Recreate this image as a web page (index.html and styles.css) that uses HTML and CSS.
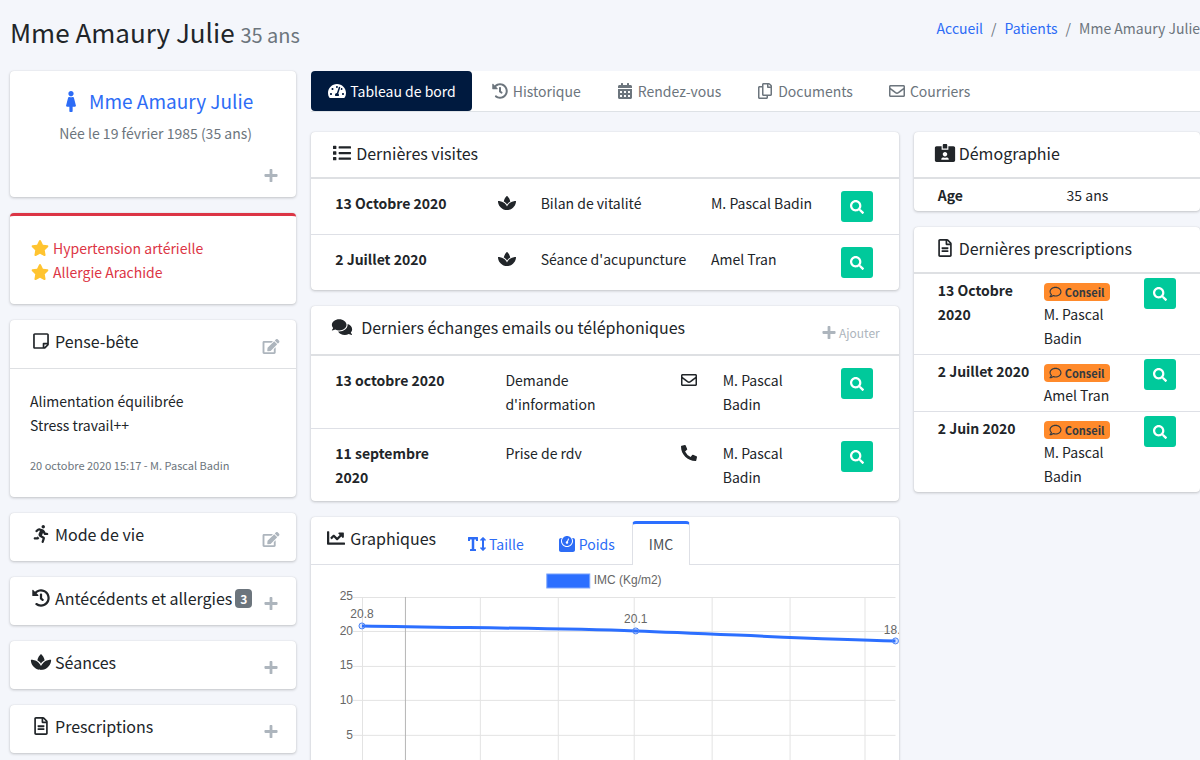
FILE: index.html
```html
<!DOCTYPE html>
<html lang="fr">
<head>
    <meta charset="UTF-8">
    <meta name="viewport" content="width=device-width, initial-scale=1.0">
    <title>Mme Amaury Julie</title>
    <link rel="stylesheet" href="styles.css">
</head>
<body>
    <svg class="sprite" aria-hidden="true">
        <symbol id="female" viewBox="0 0 256 512"><path d="M128 0c35.346 0 64 28.654 64 64s-28.654 64-64 64c-35.346 0-64-28.654-64-64S92.654 0 128 0m119.283 354.179l-48-192A24 24 0 0 0 176 144h-11.36c-22.711 10.443-49.59 10.894-73.28 0H80a24 24 0 0 0-23.283 18.179l-48 192C4.935 369.305 16.383 384 32 384h56v104c0 13.255 10.745 24 24 24h32c13.255 0 24-10.745 24-24V384h56c15.591 0 27.071-14.671 23.283-29.821z"/></symbol>
        <symbol id="plus" viewBox="0 0 448 512"><path d="M416 208H272V64c0-17.67-14.33-32-32-32h-32c-17.67 0-32 14.33-32 32v144H32c-17.67 0-32 14.33-32 32v32c0 17.67 14.33 32 32 32h144v144c0 17.67 14.33 32 32 32h32c17.67 0 32-14.33 32-32V304h144c17.67 0 32-14.33 32-32v-32c0-17.67-14.33-32-32-32z"/></symbol>
        <symbol id="star" viewBox="0 0 576 512"><path d="M259.3 17.8L194 150.2 47.9 171.5c-26.2 3.8-36.7 36.1-17.7 54.6l105.7 103-25 145.5c-4.5 26.3 23.2 46 46.4 33.7L288 439.6l130.7 68.7c23.2 12.2 50.9-7.4 46.4-33.7l-25-145.5 105.7-103c19-18.5 8.5-50.8-17.7-54.6L382 150.2 316.7 17.8c-11.7-23.6-45.6-23.9-57.4 0z"/></symbol>
        <symbol id="note" viewBox="0 0 448 512"><path d="M448 348.106V80c0-26.51-21.49-48-48-48H48C21.49 32 0 53.49 0 80v351.988c0 26.51 21.49 48 48 48h268.118a48 48 0 0 0 33.941-14.059l83.882-83.882A48 48 0 0 0 448 348.106zm-128 80.015v-76.118h76.118L320 428.121zM400 80v223.988H296c-13.255 0-24 10.745-24 24v104H48V80h352z"/></symbol>
        <symbol id="edit" viewBox="0 0 576 512"><path d="M402.6 83.2l90.2 90.2c3.8 3.8 3.8 10 0 13.8L274.4 405.6l-92.8 10.3c-12.4 1.4-22.9-9.1-21.5-21.5l10.3-92.8L388.8 83.2c3.8-3.8 10-3.8 13.8 0zm162-22.9l-48.8-48.8c-15.2-15.2-39.9-15.2-55.2 0l-35.4 35.4c-3.8 3.8-3.8 10 0 13.8l90.2 90.2c3.8 3.8 10 3.8 13.8 0l35.4-35.4c15.2-15.3 15.2-40 0-55.2zM384 346.2V448H64V128h229.8c3.2 0 6.2-1.3 8.5-3.5l40-40c7.6-7.6 2.2-20.5-8.5-20.5H48C21.5 64 0 85.5 0 112v352c0 26.5 21.5 48 48 48h352c26.5 0 48-21.5 48-48V306.2c0-10.7-12.9-16-20.5-8.5l-40 40c-2.2 2.3-3.5 5.3-3.5 8.5z"/></symbol>
        <symbol id="running" viewBox="0 0 416 512"><path d="M272 96c26.51 0 48-21.49 48-48S298.51 0 272 0s-48 21.49-48 48 21.49 48 48 48zM113.69 317.47l-14.8 34.52H32c-17.67 0-32 14.33-32 32s14.33 32 32 32h77.45c19.25 0 36.58-11.44 44.11-29.09l8.79-20.52-10.67-6.3c-17.32-10.23-30.06-25.37-37.99-42.61zM384 223.99h-44.03l-26.06-53.25c-12.5-25.55-35.45-44.23-61.78-50.94l-71.08-21.14c-28.3-6.8-57.77-.55-80.84 17.14l-39.67 30.41c-14.03 10.75-16.69 30.83-5.94 44.86s30.84 16.69 44.86 5.94l39.69-30.41c7.67-5.89 17.44-8 25.27-6.14l14.7 4.37-37.46 87.39c-12.62 29.48-1.31 64.01 26.3 80.31l84.98 50.17-27.47 87.73c-5.28 16.86 4.11 34.82 20.97 40.09 3.19 1 6.41 1.48 9.58 1.48 13.61 0 26.23-8.77 30.52-22.45l31.64-101.06c5.91-20.77-2.89-43.08-21.64-54.39l-61.24-36.14 31.31-78.28 20.27 41.43c8 16.34 24.92 26.89 43.11 26.89H384c17.67 0 32-14.33 32-32s-14.33-31.99-32-31.99z"/></symbol>
        <symbol id="history" viewBox="0 0 512 512"><path d="M504 255.531c.253 136.64-111.18 248.372-247.82 248.468-59.015.042-113.223-20.53-155.822-54.911-11.077-8.94-11.905-25.541-1.839-35.607l11.267-11.267c8.609-8.609 22.353-9.551 31.891-1.984C173.062 425.135 212.781 440 256 440c101.705 0 184-82.311 184-184 0-101.705-82.311-184-184-184-48.814 0-93.149 18.969-126.068 49.932l50.754 50.754c10.08 10.08 2.941 27.314-11.313 27.314H24c-8.837 0-16-7.163-16-16V38.627c0-14.254 17.234-21.393 27.314-11.314l49.372 49.372C129.209 34.136 189.552 8 256 8c136.81 0 247.747 110.78 248 247.531zm-180.912 78.784l9.823-12.63c8.138-10.463 6.253-25.542-4.21-33.679L288 256.349V152c0-13.255-10.745-24-24-24h-16c-13.255 0-24 10.745-24 24v135.651l65.409 50.874c10.463 8.137 25.541 6.253 33.679-4.21z"/></symbol>
        <symbol id="spa" viewBox="0 0 576 512"><path d="M568.25 192c-29.04.13-135.01 6.16-213.84 83-33.12 29.63-53.36 63.3-66.41 94.86-13.05-31.56-33.29-65.23-66.41-94.86-78.83-76.84-184.8-82.87-213.84-83-4.41-.02-7.79 3.4-7.75 7.82.23 27.92 7.14 126.14 88.77 199.3C172.79 480.94 256 480 288 480s115.19.95 199.23-80.88c81.64-73.17 88.54-171.38 88.77-199.3.04-4.42-3.34-7.84-7.75-7.82zM287.98 302.6c12.82-18.85 27.6-35.78 44.09-50.52 19.09-18.61 39.58-33.3 60.26-45.18-16.44-70.5-51.72-133.05-96.73-172.22-4.11-3.58-11.02-3.58-15.14 0-44.99 39.14-80.27 101.63-96.74 172.07 20.37 11.7 40.5 26.14 59.22 44.39a282.768 282.768 0 0 1 45.04 51.46z"/></symbol>
        <symbol id="file" viewBox="0 0 384 512"><path d="M288 248v28c0 6.6-5.4 12-12 12H108c-6.6 0-12-5.4-12-12v-28c0-6.6 5.4-12 12-12h168c6.6 0 12 5.4 12 12zm-12 72H108c-6.6 0-12 5.4-12 12v28c0 6.6 5.4 12 12 12h168c6.6 0 12-5.4 12-12v-28c0-6.6-5.4-12-12-12zm108-188.1V464c0 26.5-21.5 48-48 48H48c-26.5 0-48-21.5-48-48V48C0 21.5 21.5 0 48 0h204.1C264.8 0 277 5.1 286 14.1L369.9 98c9 8.9 14.1 21.2 14.1 33.9zm-128-80V128h76.1L256 51.9zM336 464V176H232c-13.3 0-24-10.7-24-24V48H48v416h288z"/></symbol>
        <symbol id="dashboard" viewBox="0 0 576 512"><path d="M288 32C128.94 32 0 160.94 0 320c0 52.8 14.25 102.26 39.06 144.8 5.61 9.62 16.3 15.2 27.44 15.2h443c11.14 0 21.83-5.58 27.44-15.2C561.75 422.26 576 372.8 576 320c0-159.06-128.94-288-288-288zm0 64c14.71 0 26.58 10.13 30.32 23.65-1.11 2.26-2.64 4.23-3.45 6.67l-9.22 27.67c-5.13 3.49-10.97 6.01-17.64 6.01-17.67 0-32-14.33-32-32S270.33 96 288 96zM96 384c-17.67 0-32-14.33-32-32s14.33-32 32-32 32 14.33 32 32-14.33 32-32 32zm48-160c-17.67 0-32-14.33-32-32s14.33-32 32-32 32 14.33 32 32-14.33 32-32 32zm246.77-72.41l-61.33 184C343.13 347.33 352 364.54 352 384c0 11.72-3.38 22.55-8.88 32H232.88c-5.5-9.45-8.88-20.28-8.88-32 0-33.94 26.5-61.43 59.9-63.59l61.34-184.01c4.17-12.56 17.73-19.45 30.36-15.17 12.57 4.19 19.35 17.79 15.17 30.36zm14.66 57.2l15.52-46.55c3.47-1.29 7.13-2.23 11.05-2.23 17.67 0 32 14.33 32 32s-14.33 32-32 32c-11.38-.01-20.89-6.28-26.57-15.22zM480 384c-17.67 0-32-14.33-32-32s14.33-32 32-32 32 14.33 32 32-14.33 32-32 32z"/></symbol>
        <symbol id="calendar" viewBox="0 0 448 512"><path d="M0 464c0 26.5 21.5 48 48 48h352c26.5 0 48-21.5 48-48V192H0v272zm320-196c0-6.6 5.4-12 12-12h40c6.6 0 12 5.4 12 12v40c0 6.6-5.4 12-12 12h-40c-6.6 0-12-5.4-12-12v-40zm0 128c0-6.6 5.4-12 12-12h40c6.6 0 12 5.4 12 12v40c0 6.6-5.4 12-12 12h-40c-6.6 0-12-5.4-12-12v-40zM192 268c0-6.6 5.4-12 12-12h40c6.6 0 12 5.4 12 12v40c0 6.6-5.4 12-12 12h-40c-6.6 0-12-5.4-12-12v-40zm0 128c0-6.6 5.4-12 12-12h40c6.6 0 12 5.4 12 12v40c0 6.6-5.4 12-12 12h-40c-6.6 0-12-5.4-12-12v-40zM64 268c0-6.6 5.4-12 12-12h40c6.6 0 12 5.4 12 12v40c0 6.6-5.4 12-12 12H76c-6.6 0-12-5.4-12-12v-40zm0 128c0-6.6 5.4-12 12-12h40c6.6 0 12 5.4 12 12v40c0 6.6-5.4 12-12 12H76c-6.6 0-12-5.4-12-12v-40zM400 64h-48V16c0-8.8-7.2-16-16-16h-32c-8.8 0-16 7.2-16 16v48H160V16c0-8.8-7.2-16-16-16h-32c-8.8 0-16 7.2-16 16v48H48C21.5 64 0 85.5 0 112v48h448v-48c0-26.5-21.5-48-48-48z"/></symbol>
        <symbol id="copy" viewBox="0 0 448 512"><path d="M433.941 65.941l-51.882-51.882A48 48 0 0 0 348.118 0H176c-26.51 0-48 21.49-48 48v48H48c-26.51 0-48 21.49-48 48v320c0 26.51 21.49 48 48 48h224c26.51 0 48-21.49 48-48v-48h80c26.51 0 48-21.49 48-48V99.882a48 48 0 0 0-14.059-33.941zM266 464H54a6 6 0 0 1-6-6V150a6 6 0 0 1 6-6h74v224c0 26.51 21.49 48 48 48h96v42a6 6 0 0 1-6 6zm128-96H182a6 6 0 0 1-6-6V54a6 6 0 0 1 6-6h106v88c0 13.255 10.745 24 24 24h88v202a6 6 0 0 1-6 6zm6-256h-64V48h9.632c1.591 0 3.117.632 4.243 1.757l48.368 48.368a6 6 0 0 1 1.757 4.243V112z"/></symbol>
        <symbol id="envelope" viewBox="0 0 512 512"><path d="M464 64H48C21.49 64 0 85.49 0 112v288c0 26.51 21.49 48 48 48h416c26.51 0 48-21.49 48-48V112c0-26.51-21.49-48-48-48zm0 48v40.805c-22.422 18.259-58.168 46.651-134.587 106.49-16.841 13.247-50.201 45.072-73.413 44.701-23.208.375-56.579-31.459-73.413-44.701C106.18 199.465 70.425 171.067 48 152.805V112h416zM48 400V214.398c22.914 18.251 55.409 43.862 104.938 82.646 21.857 17.205 60.134 55.186 103.062 54.955 42.717.231 80.509-37.199 103.053-54.947 49.528-38.783 82.032-64.401 104.947-82.653V400H48z"/></symbol>
        <symbol id="list" viewBox="0 0 512 512"><path d="M80 368H16a16 16 0 0 0-16 16v64a16 16 0 0 0 16 16h64a16 16 0 0 0 16-16v-64a16 16 0 0 0-16-16zm0-320H16A16 16 0 0 0 0 64v64a16 16 0 0 0 16 16h64a16 16 0 0 0 16-16V64a16 16 0 0 0-16-16zm0 160H16a16 16 0 0 0-16 16v64a16 16 0 0 0 16 16h64a16 16 0 0 0 16-16v-64a16 16 0 0 0-16-16zm416 176H176a16 16 0 0 0-16 16v32a16 16 0 0 0 16 16h320a16 16 0 0 0 16-16v-32a16 16 0 0 0-16-16zm0-320H176a16 16 0 0 0-16 16v32a16 16 0 0 0 16 16h320a16 16 0 0 0 16-16V80a16 16 0 0 0-16-16zm0 160H176a16 16 0 0 0-16 16v32a16 16 0 0 0 16 16h320a16 16 0 0 0 16-16v-32a16 16 0 0 0-16-16z"/></symbol>
        <symbol id="comments" viewBox="0 0 576 512"><path d="M416 192c0-88.4-93.1-160-208-160S0 103.6 0 192c0 34.3 14.1 65.9 38 92-13.4 30.2-35.5 54.2-35.8 54.5-2.2 2.3-2.8 5.7-1.5 8.7S4.8 352 8 352c36.6 0 66.9-12.3 88.7-25 32.2 15.7 70.3 25 111.3 25 114.9 0 208-71.6 208-160zm122 220c23.9-26 38-57.7 38-92 0-66.9-53.5-124.2-129.3-148.1.9 6.6 1.3 13.3 1.3 20.1 0 105.9-107.7 192-240 192-10.8 0-21.3-.8-31.7-1.9C207.8 439.6 281.8 480 368 480c41 0 79.1-9.2 111.3-25 21.8 12.7 52.1 25 88.7 25 3.2 0 6.1-1.9 7.3-4.8 1.3-2.9.7-6.3-1.5-8.7-.3-.3-22.4-24.2-35.8-54.5z"/></symbol>
        <symbol id="search" viewBox="0 0 512 512"><path d="M505 442.7L405.3 343c-4.5-4.5-10.6-7-17-7H372c27.6-35.3 44-79.7 44-128C416 93.1 322.9 0 208 0S0 93.1 0 208s93.1 208 208 208c48.3 0 92.7-16.4 128-44v16.3c0 6.4 2.5 12.5 7 17l99.7 99.7c9.4 9.4 24.6 9.4 33.9 0l28.3-28.3c9.4-9.4 9.4-24.6.1-34zM208 336c-70.7 0-128-57.2-128-128 0-70.7 57.2-128 128-128 70.7 0 128 57.2 128 128 0 70.7-57.2 128-128 128z"/></symbol>
        <symbol id="idcard" viewBox="0 0 576 512"><path d="M528 64H384v96H192V64H48C21.5 64 0 85.5 0 112v352c0 26.5 21.5 48 48 48h480c26.5 0 48-21.5 48-48V112c0-26.5-21.5-48-48-48zM288 224c35.3 0 64 28.7 64 64s-28.7 64-64 64-64-28.7-64-64 28.7-64 64-64zm93.3 224H194.7c-10.4 0-18.8-10-15.6-19.8 8.3-25.6 32.4-44.2 60.9-44.2h8.2c12.3 5.1 25.7 8 39.8 8s27.6-2.9 39.8-8h8.2c28.4 0 52.5 18.5 60.9 44.2 3.2 9.8-5.2 19.8-15.6 19.8zM352 32c0-17.7-14.3-32-32-32h-64c-17.7 0-32 14.3-32 32v96h128V32z"/></symbol>
        <symbol id="phone" viewBox="0 0 512 512"><path d="M497.39 361.8l-112-48a24 24 0 0 0-28 6.9l-49.6 60.6A370.66 370.66 0 0 1 130.6 204.11l60.6-49.6a23.94 23.94 0 0 0 6.9-28l-48-112A24.16 24.16 0 0 0 122.6.61l-104 24A24 24 0 0 0 0 48c0 256.5 207.9 464 464 464a24 24 0 0 0 23.4-18.6l24-104a24.29 24.29 0 0 0-14.01-27.6z"/></symbol>
        <symbol id="comment" viewBox="0 0 512 512"><path d="M256 32C114.6 32 0 125.1 0 240c0 47.6 19.9 91.2 52.9 126.3C38 405.7 7 439.1 6.5 439.5c-6.6 7-8.4 17.2-4.6 26S14.4 480 24 480c61.5 0 110-25.7 139.1-46.3C192 442.8 223.2 448 256 448c141.4 0 256-93.1 256-208S397.4 32 256 32zm0 368c-26.7 0-53.1-4.1-78.4-12.1l-22.7-7.2-19.5 13.8c-14.3 10.1-33.9 21.4-57.5 29 7.3-12.1 14.4-25.7 19.9-40.2l10.6-28.1-20.6-21.8C69.7 314.1 48 282.2 48 240c0-88.2 93.3-160 208-160s208 71.8 208 160-93.3 160-208 160z"/></symbol>
        <symbol id="chart" viewBox="0 0 512 512"><path d="M496 384H64V80c0-8.84-7.16-16-16-16H16C7.16 64 0 71.16 0 80v336c0 17.67 14.33 32 32 32h464c8.84 0 16-7.16 16-16v-32c0-8.84-7.16-16-16-16zM464 96H345.94c-21.38 0-32.09 25.85-16.97 40.97l32.4 32.4L288 242.75l-73.37-73.37c-12.5-12.5-32.76-12.5-45.25 0l-68.69 68.69c-6.25 6.25-6.25 16.38 0 22.63l22.62 22.62c6.25 6.25 16.38 6.25 22.63 0L192 237.25l73.37 73.37c12.5 12.5 32.76 12.5 45.25 0l96-96 32.4 32.4c15.12 15.12 40.97 4.41 40.97-16.97V112c.01-8.84-7.15-16-15.99-16z"/></symbol>
        <symbol id="height" viewBox="0 0 576 512"><path d="M304 32H16A16 16 0 0 0 0 48v96a16 16 0 0 0 16 16h32a16 16 0 0 0 16-16v-32h56v304H80a16 16 0 0 0-16 16v32a16 16 0 0 0 16 16h160a16 16 0 0 0 16-16v-32a16 16 0 0 0-16-16h-40V112h56v32a16 16 0 0 0 16 16h32a16 16 0 0 0 16-16V48a16 16 0 0 0-16-16zm256 336h-48V144h48c14.31 0 21.33-17.31 11.31-27.31l-80-80a16 16 0 0 0-22.62 0l-80 80C379.36 126 384.36 144 400 144h48v224h-48c-14.31 0-21.32 17.31-11.31 27.31l80 80a16 16 0 0 0 22.62 0l80-80C580.64 386 575.64 368 560 368z"/></symbol>
        <symbol id="weight" viewBox="0 0 512 512"><path d="M448 64h-25.98C438.44 92.28 448 125.01 448 160c0 105.87-86.13 192-192 192S64 265.87 64 160c0-34.99 9.56-67.72 25.98-96H64C28.71 64 0 92.71 0 128v320c0 35.29 28.71 64 64 64h384c35.29 0 64-28.71 64-64V128c0-35.29-28.71-64-64-64zM256 320c88.37 0 160-71.63 160-160S344.37 0 256 0 96 71.63 96 160s71.63 160 160 160zm-.3-151.94l33.58-78.36c3.5-8.17 12.94-11.92 21.03-8.41 8.12 3.48 11.88 12.89 8.41 21l-33.67 78.55C291.73 188 296 197.45 296 208c0 22.09-17.91 40-40 40s-40-17.91-40-40c0-21.98 17.76-39.77 39.7-39.94z"/></symbol>
    </svg>

    <header class="page-header">
        <h1>Mme Amaury Julie <small>35 ans</small></h1>
        <nav class="breadcrumb">
            <a href="#">Accueil</a>
            <span>/</span>
            <a href="#">Patients</a>
            <span>/</span>
            <span>Mme Amaury Julie</span>
        </nav>
    </header>

    <div class="layout">
        <aside class="column">
            <section class="card profile">
                <h2><a href="#"><svg class="icon"><use href="#female"/></svg>Mme Amaury Julie</a></h2>
                <p>Née le 19 février 1985 (35 ans)</p>
                <button class="tool" type="button" aria-label="Ajouter"><svg class="icon"><use href="#plus"/></svg></button>
            </section>
            <section class="card alert">
                <ul>
                    <li><svg class="icon"><use href="#star"/></svg>Hypertension artérielle</li>
                    <li><svg class="icon"><use href="#star"/></svg>Allergie Arachide</li>
                </ul>
            </section>
            <section class="card">
                <div class="card-header ruled">
                    <h3><svg class="icon"><use href="#note"/></svg>Pense-bête</h3>
                    <button class="tool" type="button" aria-label="Modifier"><svg class="icon"><use href="#edit"/></svg></button>
                </div>
                <div class="card-body">
                    <p>Alimentation équilibrée<br>Stress travail++</p>
                    <p class="meta">20 octobre 2020 15:17 - M. Pascal Badin</p>
                </div>
            </section>
            <section class="card">
                <div class="card-header">
                    <h3><svg class="icon"><use href="#running"/></svg>Mode de vie</h3>
                    <button class="tool" type="button" aria-label="Modifier"><svg class="icon"><use href="#edit"/></svg></button>
                </div>
            </section>
            <section class="card">
                <div class="card-header">
                    <h3><svg class="icon"><use href="#history"/></svg>Antécédents et allergies<span class="count">3</span></h3>
                    <button class="tool" type="button" aria-label="Ajouter"><svg class="icon"><use href="#plus"/></svg></button>
                </div>
            </section>
            <section class="card">
                <div class="card-header">
                    <h3><svg class="icon"><use href="#spa"/></svg>Séances</h3>
                    <button class="tool" type="button" aria-label="Ajouter"><svg class="icon"><use href="#plus"/></svg></button>
                </div>
            </section>
            <section class="card">
                <div class="card-header">
                    <h3><svg class="icon"><use href="#file"/></svg>Prescriptions</h3>
                    <button class="tool" type="button" aria-label="Ajouter"><svg class="icon"><use href="#plus"/></svg></button>
                </div>
            </section>
        </aside>

        <main class="content">
            <nav class="tabs">
                <a class="active" href="#"><svg class="icon"><use href="#dashboard"/></svg>Tableau de bord</a>
                <a href="#"><svg class="icon"><use href="#history"/></svg>Historique</a>
                <a href="#"><svg class="icon"><use href="#calendar"/></svg>Rendez-vous</a>
                <a href="#"><svg class="icon"><use href="#copy"/></svg>Documents</a>
                <a href="#"><svg class="icon"><use href="#envelope"/></svg>Courriers</a>
            </nav>

            <div class="column main-column">
                <section class="card">
                    <div class="card-header compact">
                        <h3><svg class="icon"><use href="#list"/></svg>Dernières visites</h3>
                    </div>
                    <table class="visits">
                        <tr>
                            <th scope="row">13 Octobre 2020</th>
                            <td><svg class="icon"><use href="#spa"/></svg></td>
                            <td>Bilan de vitalité</td>
                            <td>M. Pascal Badin</td>
                            <td><button class="view" type="button" aria-label="Voir"><svg class="icon"><use href="#search"/></svg></button></td>
                        </tr>
                        <tr>
                            <th scope="row">2 Juillet 2020</th>
                            <td><svg class="icon"><use href="#spa"/></svg></td>
                            <td>Séance d'acupuncture</td>
                            <td>Amel Tran</td>
                            <td><button class="view" type="button" aria-label="Voir"><svg class="icon"><use href="#search"/></svg></button></td>
                        </tr>
                    </table>
                </section>

                <section class="card">
                    <div class="card-header wide">
                        <h3 class="spaced"><svg class="icon"><use href="#comments"/></svg>Derniers échanges emails ou téléphoniques</h3>
                        <button class="tool" type="button"><svg class="icon"><use href="#plus"/></svg>Ajouter</button>
                    </div>
                    <table class="exchanges">
                        <tr>
                            <th scope="row">13 octobre 2020</th>
                            <td>Demande d'information</td>
                            <td><svg class="icon"><use href="#envelope"/></svg></td>
                            <td>M. Pascal Badin</td>
                            <td><button class="view" type="button" aria-label="Voir"><svg class="icon"><use href="#search"/></svg></button></td>
                        </tr>
                        <tr>
                            <th scope="row">11 septembre 2020</th>
                            <td>Prise de rdv</td>
                            <td><svg class="icon"><use href="#phone"/></svg></td>
                            <td>M. Pascal Badin</td>
                            <td><button class="view" type="button" aria-label="Voir"><svg class="icon"><use href="#search"/></svg></button></td>
                        </tr>
                    </table>
                </section>

                <section class="card graphs">
                    <div class="graph-header">
                        <h3><svg class="icon"><use href="#chart"/></svg>Graphiques</h3>
                        <nav class="graph-tabs">
                            <a href="#"><svg class="icon"><use href="#height"/></svg>Taille</a>
                            <a href="#"><svg class="icon"><use href="#weight"/></svg>Poids</a>
                            <a class="active" href="#">IMC</a>
                        </nav>
                    </div>
                    <svg class="chart" viewBox="0 0 588 240" role="img" aria-label="IMC (Kg/m2)">
                        <rect class="legend" x="236" y="9" width="43" height="14"/>
                        <text x="283" y="19">IMC (Kg/m2)</text>
                        <path class="grid" d="M42 32.5H585M42 66.5H585M42 101.5H585M42 135.5H585M42 170.5H585M42 205.5H585M51.5 32V215M169.5 32V215M247.5 32V215M323.5 32V215M401.5 32V215M479.5 32V215M554.5 32V215"/>
                        <path class="grid dark" d="M94.5 32V215"/>
                        <g class="ticks">
                            <text x="42" y="35">25</text>
                            <text x="42" y="70">20</text>
                            <text x="42" y="104">15</text>
                            <text x="42" y="139">10</text>
                            <text x="42" y="174">5</text>
                            <text x="42" y="209">0</text>
                        </g>
                        <path class="line" d="M51 61C160 63 240 63 325 66C410 69 500 74 585 76"/>
                        <g class="points">
                            <circle cx="51" cy="61" r="3"/>
                            <circle cx="325" cy="66" r="3"/>
                            <circle cx="585" cy="76" r="3"/>
                        </g>
                        <g class="values">
                            <text x="51" y="53">20.8</text>
                            <text x="325" y="58">20.1</text>
                            <text x="585" y="69">18.6</text>
                        </g>
                    </svg>
                </section>
            </div>

            <div class="column">
                <section class="card">
                    <div class="card-header compact">
                        <h3><svg class="icon"><use href="#idcard"/></svg>Démographie</h3>
                    </div>
                    <table class="small demography">
                        <tr>
                            <th scope="row">Age</th>
                            <td>35 ans</td>
                        </tr>
                    </table>
                </section>

                <section class="card">
                    <div class="card-header compact">
                        <h3><svg class="icon"><use href="#file"/></svg>Dernières prescriptions</h3>
                    </div>
                    <table class="small prescriptions">
                        <tr>
                            <th scope="row">13 Octobre 2020</th>
                            <td><span class="badge"><svg class="icon"><use href="#comment"/></svg>Conseil</span><br>M. Pascal Badin</td>
                            <td><button class="view" type="button" aria-label="Voir"><svg class="icon"><use href="#search"/></svg></button></td>
                        </tr>
                        <tr>
                            <th scope="row">2 Juillet 2020</th>
                            <td><span class="badge"><svg class="icon"><use href="#comment"/></svg>Conseil</span><br>Amel Tran</td>
                            <td><button class="view" type="button" aria-label="Voir"><svg class="icon"><use href="#search"/></svg></button></td>
                        </tr>
                        <tr>
                            <th scope="row">2 Juin 2020</th>
                            <td><span class="badge"><svg class="icon"><use href="#comment"/></svg>Conseil</span><br>M. Pascal Badin</td>
                            <td><button class="view" type="button" aria-label="Voir"><svg class="icon"><use href="#search"/></svg></button></td>
                        </tr>
                    </table>
                </section>
            </div>
        </main>
    </div>
</body>
</html>
```
FILE: styles.css
```css
* {
    box-sizing: border-box;
}
body {
    margin: 0;
    padding-left: 10px;
    background: #f4f6fb;
    color: #212529;
    font-family: "Noto Sans CJK JP", "Open Sans", sans-serif;
    font-size: 14px;
    line-height: 24px;
}
h1, h2, h3, p, ul {
    margin: 0;
    padding: 0;
    font-weight: 400;
}
a {
    color: #2d6cf6;
    text-decoration: none;
}
button {
    font-family: inherit;
    border: none;
    cursor: pointer;
}
.sprite {
    display: none;
}
.icon {
    width: 20px;
    height: 16px;
    flex: none;
    fill: currentColor;
}

/* header */
.page-header {
    display: flex;
    justify-content: space-between;
    padding: 16px 0 23px;
}
.page-header h1 {
    font-size: 26px;
    line-height: 32px;
    height: 32px;
}
.page-header small {
    font-size: 20px;
    line-height: 20px;
    color: #6c757d;
}
.breadcrumb {
    display: flex;
    gap: 8px;
    color: #6c757d;
    white-space: nowrap;
}

/* grid */
.layout {
    display: grid;
    grid-template-columns: repeat(4, minmax(0, 1fr));
    gap: 15px;
    align-items: start;
}
.content {
    grid-column: span 3;
    display: grid;
    grid-template-columns: repeat(3, minmax(0, 1fr));
    column-gap: 15px;
    row-gap: 20px;
    align-items: start;
}
.column {
    display: flex;
    flex-direction: column;
    gap: 16px;
}
.main-column {
    grid-column: span 2;
}

/* cards */
.card {
    background: #fff;
    border-radius: 4px;
    box-shadow: 0 0 1px rgba(0, 0, 0, .125), 0 1px 3px rgba(0, 0, 0, .2);
    overflow: hidden;
}
.card-body {
    padding: 20px;
}
.card-header {
    display: flex;
    justify-content: space-between;
    height: 48px;
    padding: 11px 15px 12px 20px;
}
.card-header.wide {
    padding-right: 19px;
}
.card-header.compact {
    height: 45px;
}
.card-header.ruled {
    height: 49px;
    border-bottom: 1px solid #dee0e3;
}
h3 {
    display: flex;
    align-items: center;
    gap: 3px;
    font-size: 16px;
    line-height: 20px;
    height: 20px;
    white-space: nowrap;
}
h3.spaced {
    gap: 8px;
}
h3 .icon {
    width: 22px;
    height: 18px;
}
.tool {
    display: flex;
    align-items: center;
    align-self: flex-end;
    height: 20px;
    padding: 0;
    background: none;
    color: #adb5bd;
    font-size: 12px;
}
.tool .icon {
    height: 15px;
}
.meta {
    margin-top: 16px;
    font-size: 11px;
    color: #6c757d;
}
.count {
    padding: 0 5px;
    border-radius: 4px;
    background: #6c757d;
    color: #fff;
    font-size: 12px;
    font-weight: 700;
    line-height: 19px;
}

.profile {
    display: flex;
    flex-direction: column;
    align-items: center;
    padding: 18px 15px 12px 20px;
    color: #6c757d;
}
.profile h2 {
    font-size: 19px;
    margin-bottom: 8px;
}
.profile h2 a {
    display: flex;
    align-items: center;
    gap: 5px;
}
.profile h2 .icon {
    width: 26px;
    height: 21px;
}
.profile .tool {
    margin-top: 20px;
}

.alert {
    border-top: 3px solid #dc3545;
    padding: 20px;
    color: #dc3545;
}
.alert ul {
    list-style: none;
}
.alert li {
    display: flex;
    align-items: center;
    gap: 3px;
}
.alert .icon {
    fill: #ffc430;
}

/* tabs */
.tabs {
    grid-column: span 3;
    display: flex;
    gap: 2px;
    background: #fff;
    border-bottom: 1px solid #dee2e6;
    border-radius: 4px 0 0 0;
}
.tabs a {
    display: flex;
    align-items: center;
    gap: 3px;
    padding: 8px 16px;
    border-radius: 4px;
    color: #6c757d;
}
.tabs a.active {
    background: #001a3f;
    color: #fff;
}

/* tables */
table {
    width: 100%;
    table-layout: fixed;
    border-collapse: separate;
    border-spacing: 0;
    border-top: 2px solid #dee0e3;
}
th, td {
    padding: 12px;
    vertical-align: top;
    text-align: left;
}
th {
    font-weight: 700;
}
th:first-child {
    padding-left: 24px;
}
tr + tr th, tr + tr td {
    border-top: 1px solid #dee0e6;
}
td .icon {
    display: inline-block;
    vertical-align: -2px;
}
.small th, .small td {
    padding-top: 4px;
    padding-bottom: 4px;
    padding-right: 4px;
}
.small td {
    padding-left: 4px;
}
.visits th { width: 30%; }
.visits td:nth-child(2) { width: 7%; }
.visits td:nth-child(3) { width: 29%; }
.visits td:nth-child(4) { width: 22%; }
.exchanges th { width: 31%; padding-right: 32px; }
.exchanges td:nth-child(2) { width: 30%; }
.exchanges td:nth-child(3) { width: 7%; }
.exchanges td:nth-child(4) { width: 20%; }
.demography th { width: 52%; }
.prescriptions th { width: 44%; }
.prescriptions td:nth-child(2) { width: 35%; }
.visits td:nth-child(2), .exchanges td:nth-child(3) {
    padding-left: 9px;
    padding-right: 0;
}
.visits td:last-child, .exchanges td:last-child {
    padding-left: 13px;
}
.view {
    display: flex;
    align-items: center;
    justify-content: center;
    width: 32px;
    height: 31px;
    padding: 0;
    border-radius: 3px;
    background: #00c99b;
    color: #fff;
}
.view .icon {
    height: 14px;
}
.badge {
    display: inline-flex;
    align-items: center;
    gap: 3px;
    height: 18px;
    padding: 0 5px;
    border-radius: 4px;
    background: #ff8a2b;
    color: #343a40;
    font-size: 11px;
    font-weight: 700;
    vertical-align: middle;
}
.badge .icon {
    width: 13px;
    height: 12px;
}

/* graph */
.graph-header {
    display: flex;
    align-items: flex-end;
    gap: 15px;
    padding: 4px 14px 0;
    border-bottom: 1px solid #dee0e6;
}
.graph-header h3 {
    align-self: flex-start;
    margin-top: 7px;
}
.graph-tabs {
    display: flex;
    margin-bottom: -1px;
}
.graph-tabs a {
    display: flex;
    align-items: center;
    gap: 2px;
    padding: 8px 16px 9px 15px;
    border: 1px solid transparent;
    border-top-width: 3px;
    border-bottom: none;
    border-radius: 4px 4px 0 0;
}
.graph-tabs a.active {
    padding-left: 16px;
    border-color: #2c6fff #dee0e6 #fff;
    background: #fff;
    color: #495057;
}
.chart {
    display: block;
    width: 100%;
    font-family: "Liberation Sans", Arial, sans-serif;
    font-size: 12px;
    fill: #666;
}
.chart .legend {
    fill: #2c6fff;
    stroke: #7ba4fb;
}
.chart .grid {
    stroke: #e3e3e3;
}
.chart .dark {
    stroke: #b5b5b5;
}
.chart .line {
    fill: none;
    stroke: #2c6fff;
    stroke-width: 3;
}
.chart .points {
    fill: #2c6fff33;
    stroke: #4a83f3;
}
.chart .ticks {
    text-anchor: end;
}
.chart .values {
    text-anchor: middle;
}
```
